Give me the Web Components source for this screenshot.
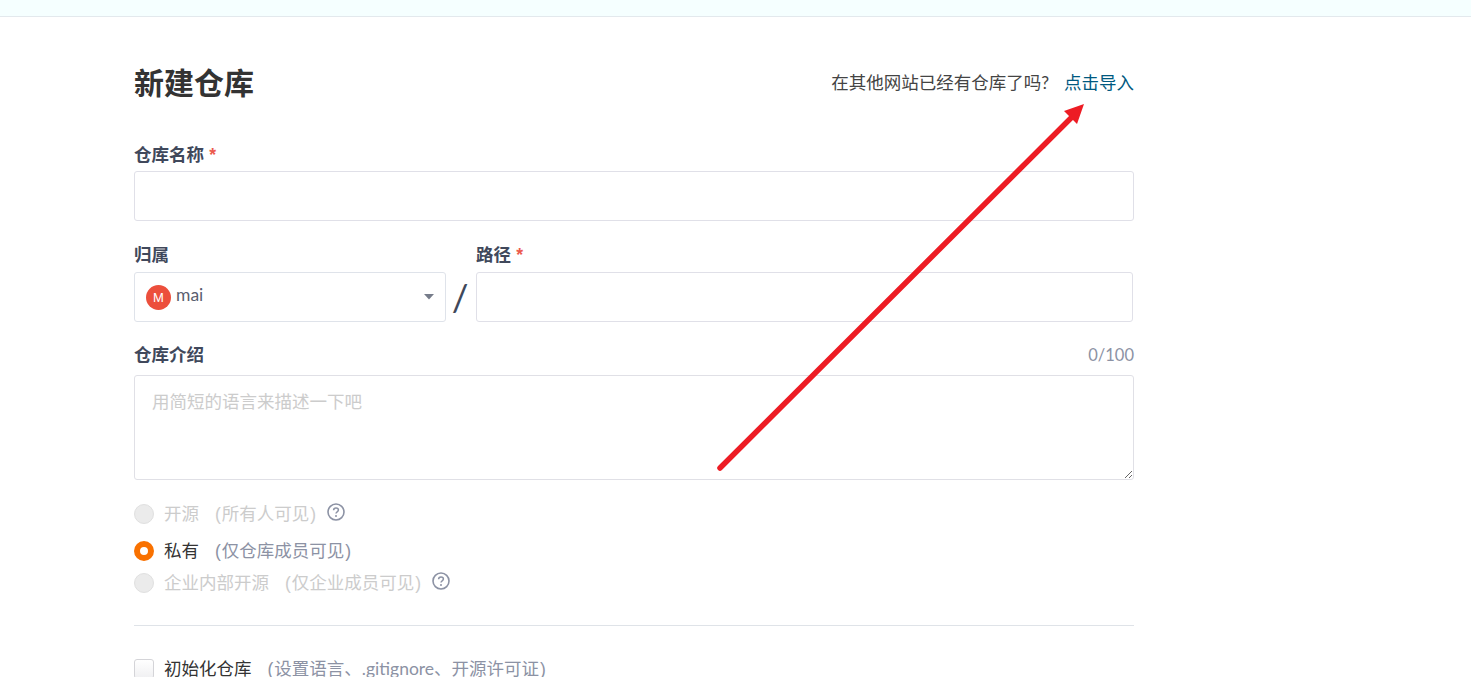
<!DOCTYPE html>
<html lang="zh-CN">
<head>
<meta charset="utf-8">
<title>新建仓库</title>
<style>
  html, body { margin: 0; height: 677px; overflow: hidden; background: #fff; }
  body { font: 17.5px/24px Lato, "Noto Sans CJK SC", sans-serif; color: #40485b; position: relative; }
</style>
</head>
<body>
<top-strip></top-strip>
<form-page>
  <page-head></page-head>
  <form-field label="仓库名称" required style="margin-top:39px"><box-input></box-input></form-field>
  <owner-row></owner-row>
  <form-field label="仓库介绍" counter="0/100" style="margin-top:21px;--gap:8px">
    <box-textarea placeholder="用简短的语言来描述一下吧"></box-textarea>
  </form-field>
  <radio-option name="开源" hint="所有人可见" disabled help style="margin-top:22px"></radio-option>
  <radio-option name="私有" hint="仅仓库成员可见" checked style="margin-top:13px"></radio-option>
  <radio-option name="企业内部开源" hint="仅企业成员可见" disabled help style="margin-top:8px"></radio-option>
  <hr-line></hr-line>
  <check-option name="初始化仓库" hint="设置语言、.gitignore、开源许可证"></check-option>
</form-page>
<arrow-overlay></arrow-overlay>

<script>
// small helper, every element is just a shadow root with its own style
class Base extends HTMLElement {
    constructor() {
        super();
        this.attachShadow({ mode: 'open' });
    }
    connectedCallback() {
        this.shadowRoot.innerHTML = this.render();
    }
}

const helpIcon = `<svg width="18" height="18" viewBox="0 0 18 18" fill="none">
    <circle cx="9" cy="9" r="8" stroke="#8c92a4" stroke-width="1.6"/>
    <path d="M6.6 7.2c0-1.4 1-2.3 2.4-2.3s2.4.9 2.4 2.1c0 1.9-2.4 1.8-2.4 3.6" stroke="#8c92a4" stroke-width="1.5"/>
    <circle cx="9" cy="13" r="1" fill="#8c92a4"/>
</svg>`;

// the brackets use their own latin font so they stay narrow next to the CJK text
const hintText = (text) => `<span class="hint"><span class="p">(</span><span class="t">${text}</span><span class="p">)</span></span>`;

class TopStrip extends Base {
    render() {
        return `<style>:host { display: block; height: 16px; background: #f5ffff; border-bottom: 1px solid #e3e9ed; }</style>`;
    }
}

class FormPage extends Base {
    render() {
        return `<style>:host { display: block; width: 1000px; margin-left: 134px; }</style><slot></slot>`;
    }
}

class PageHead extends Base {
    render() {
        return `<style>
            :host { display: flex; justify-content: space-between; align-items: center; height: 42px; padding-top: 45px; color: #333; }
            h1 { margin: -2px 0 0; font-size: 30px; line-height: 42px; font-weight: 700; color: #333; }
            a { color: #005980; text-decoration: none; margin-left: 15px; }
            .tip { color: #444; }
        </style>
        <h1>新建仓库</h1>
        <div class="tip">在其他网站已经有仓库了吗?<a href="#">点击导入</a></div>`;
    }
}

class FormField extends Base {
    render() {
        const star = this.hasAttribute('required') ? ' <i>*</i>' : '';
        const counter = this.getAttribute('counter');
        return `<style>
            :host { display: block; }
            .top { display: flex; justify-content: space-between; height: 24px; margin-bottom: var(--gap, 4px); }
            b { font-weight: 700; color: #40485b; }
            i { font: 700 17.5px/24px "Liberation Sans", sans-serif; color: #ec5a4d; margin-left: 1px; }
            span { color: #8c92a4; font-size: 16.5px; }
        </style>
        <div class="top"><b>${this.getAttribute('label')}${star}</b>${counter ? `<span>${counter}</span>` : ''}</div>
        <slot></slot>`;
    }
}

class BoxInput extends Base {
    render() {
        return `<style>:host { display: block; height: 50px; box-sizing: border-box; border: 1px solid #e0e0e8; border-radius: 3px; background: #fff; }</style>`;
    }
}

class BoxTextarea extends Base {
    render() {
        return `<style>
            :host { display: block; }
            div { height: 105px; box-sizing: border-box; padding: 14px 17px; border: 1px solid #e0e0e6; border-radius: 3px;
                  color: #ccc; resize: vertical; overflow: auto; }
        </style>
        <div>${this.getAttribute('placeholder')}</div>`;
    }
}

class OwnerRow extends Base {
    render() {
        return `<style>
            :host { display: flex; margin-top: 22px; --gap: 5px; }
            .owner { width: 312px; flex: none; }
            .slash { width: 30px; box-sizing: border-box; padding: 30px 2px 0 0; flex: none; text-align: center; font-size: 37px; line-height: 48px; color: #40485b; }
            .path { flex: 1; margin-right: 1px; }
        </style>
        <form-field class="owner" label="归属"><owner-select></owner-select></form-field>
        <div class="slash">/</div>
        <form-field class="path" label="路径" required><box-input></box-input></form-field>`;
    }
}

class OwnerSelect extends Base {
    render() {
        return `<style>
            :host { display: flex; align-items: center; height: 50px; box-sizing: border-box; padding: 0 11px; border: 1px solid #dfe3ea; border-radius: 3px; color: #5a6070; }
            .avatar { width: 25px; height: 25px; border-radius: 50%; background: #ec4f3c; color: #fff; font: 13px/25px "Liberation Sans", sans-serif; text-align: center; flex: none; }
            .name { flex: 1; margin-left: 5px; position: relative; top: -2px; }
            svg { flex: none; }
        </style>
        <span class="avatar">M</span><span class="name">mai</span>
        <svg width="10" height="6" viewBox="0 0 10 6"><path d="M0 0h10L5 5.500z" fill="#767c8a"/></svg>`;
    }
}

class RadioOption extends Base {
    render() {
        const disabled = this.hasAttribute('disabled');
        const checked = this.hasAttribute('checked');
        return `<style>
            :host { display: flex; align-items: center; height: 24px; }
            .dot { width: 20px; height: 20px; box-sizing: border-box; border-radius: 50%; flex: none; margin-right: 10px;
                   background: ${checked ? '#fff' : '#ebebeb'};
                   border: ${checked ? '6.5px solid #f97100' : '1px solid #e0e0e0'}; }
            .name { color: ${disabled ? '#ccc' : '#333'}; }
            .hint { color: ${disabled ? '#ccc' : '#8c92a4'}; margin-left: 16px; }
            .p { font-family: "Liberation Sans", sans-serif; }
            .t { margin: 0 1px; }
            svg { margin-left: 11px; position: relative; top: -2px; }
        </style>
        <span class="dot"></span><span class="name">${this.getAttribute('name')}</span>${hintText(this.getAttribute('hint'))}
        ${this.hasAttribute('help') ? helpIcon : ''}`;
    }
}

class HrLine extends Base {
    render() {
        return `<style>:host { display: block; height: 1px; background: #dfe3e8; margin: 30px 0 31px; }</style>`;
    }
}

class CheckOption extends Base {
    render() {
        return `<style>
            :host { display: flex; align-items: center; height: 24px; }
            .box { width: 20px; height: 20px; box-sizing: border-box; border: 1px solid #d4d4d8; border-radius: 3px; flex: none; margin-right: 10px;
                   background: linear-gradient(#fff, #f0f0f2); }
            .name { color: #333; }
            .hint { color: #8c92a4; margin-left: 16px; }
            .p { font-family: "Liberation Sans", sans-serif; }
            .t { margin: 0 1px; }
        </style>
        <span class="box"></span><span class="name">${this.getAttribute('name')}</span>${hintText(this.getAttribute('hint'))}`;
    }
}

// red annotation drawn over the screenshot
class ArrowOverlay extends Base {
    render() {
        return `<style>:host { position: absolute; left: 0; top: 0; pointer-events: none; }</style>
        <svg width="1471" height="677" viewBox="0 0 1471 677" style="display:block">
            <path d="M720 468L1072 117" stroke="#ed1c24" stroke-width="5.500" stroke-linecap="round" fill="none"/>
            <path d="M1084 104L1064 111L1077 124z" fill="#ed1c24"/>
        </svg>`;
    }
}

customElements.define('top-strip', TopStrip);
customElements.define('form-page', FormPage);
customElements.define('page-head', PageHead);
customElements.define('form-field', FormField);
customElements.define('box-input', BoxInput);
customElements.define('box-textarea', BoxTextarea);
customElements.define('owner-row', OwnerRow);
customElements.define('owner-select', OwnerSelect);
customElements.define('radio-option', RadioOption);
customElements.define('hr-line', HrLine);
customElements.define('check-option', CheckOption);
customElements.define('arrow-overlay', ArrowOverlay);
</script>
</body>
</html>
